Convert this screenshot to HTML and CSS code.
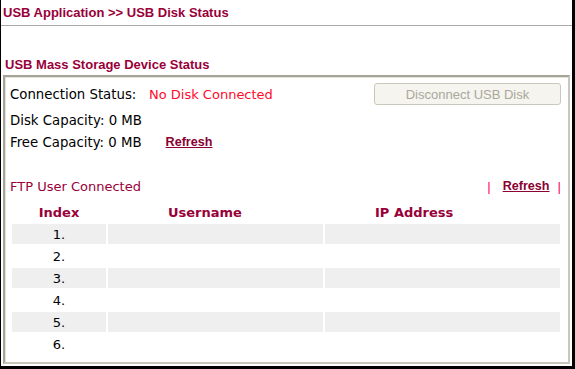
FILE: index.html
```html
<!DOCTYPE html>
<html>
<head>
<meta charset="utf-8">
<link rel="stylesheet" href="styles.css">
</head>
<body>
<div class="page">
  <div class="title">USB Application &gt;&gt; USB Disk Status</div>
  <div class="section-title">USB Mass Storage Device Status</div>
  <div class="box">
    <div class="info">
      <div class="row row1">
        <span class="label">Connection Status:</span>
        <span class="status">No Disk Connected</span>
        <button class="btn" disabled>Disconnect USB Disk</button>
      </div>
      <div class="row row2">Disk Capacity: 0 MB</div>
      <div class="row row3">Free Capacity: 0 MB <a class="link refresh1" href="#">Refresh</a></div>
    </div>
    <div class="ftp-row">
      <span class="ftp-title">FTP User Connected</span>
      <span class="ftp-actions"><span class="bar">|</span><a class="link" href="#">Refresh</a><span class="bar bar2">|</span></span>
    </div>
    <table class="users">
      <colgroup><col class="c1"><col class="c2"><col class="c3"></colgroup>
      <thead>
        <tr><th class="h1">Index</th><th class="h2">Username</th><th class="h3">IP Address</th></tr>
      </thead>
      <tbody>
        <tr class="odd"><td class="idx">1.</td><td></td><td></td></tr>
        <tr><td class="idx">2.</td><td></td><td></td></tr>
        <tr class="odd"><td class="idx">3.</td><td></td><td></td></tr>
        <tr><td class="idx">4.</td><td></td><td></td></tr>
        <tr class="odd"><td class="idx">5.</td><td></td><td></td></tr>
        <tr><td class="idx">6.</td><td></td><td></td></tr>
      </tbody>
    </table>
  </div>
</div>
</body>
</html>
```

FILE: styles.css
```css
html, body {
  margin: 0;
  padding: 0;
  background: #fff;
}
.page {
  width: 571px;
  height: 366px;
  border-left: 1px solid #000;
  border-right: 3px solid #000;
  border-bottom: 3px solid #000;
  font-family: "DejaVu Sans", Verdana, sans-serif;
  font-size: 13.3px;
  color: #000;
  overflow: hidden;
}
.title {
  height: 25px;
  line-height: 25px;
  padding-left: 2px;
  border-bottom: 1px solid #a8a8a8;
  font-family: "Liberation Sans", Arial, sans-serif;
  font-weight: bold;
  font-size: 13px;
  color: #99003a;
}
.section-title {
  margin-top: 30px;
  height: 19px;
  line-height: 17px;
  padding-left: 4px;
  font-family: "Liberation Sans", Arial, sans-serif;
  font-weight: bold;
  font-size: 13px;
  color: #99003a;
}
.box {
  margin: 0 2px;
  height: 285px;
  border: 2px solid #a5a498;
  border-right-color: #c9c7ba;
  border-bottom-color: #c9c7ba;
  box-shadow: inset 1px 1px 0 #e4e2d8;
  padding: 0 5px;
}
.info {
  padding-top: 4px;
}
.row {
  display: flex;
  align-items: center;
}
.row1 { height: 26px; }
.row2 { height: 26px; }
.row3 { height: 18px; }
.label {
  width: 139px;
}
.status {
  color: #ff0a2a;
  font-size: 13px;
  flex: 1;
}
.btn {
  width: 187px;
  height: 22px;
  margin-right: 2px;
  padding: 0;
  background: #f5f4ee;
  border: 1px solid #cac8bb;
  border-radius: 3px;
  font-family: "Liberation Sans", Arial, sans-serif;
  font-size: 13px;
  color: #a9a89c;
}
.link {
  font-family: "Liberation Sans", Arial, sans-serif;
  font-weight: bold;
  font-size: 12.6px;
  color: #8a0033;
  text-decoration: underline;
}
.refresh1 {
  margin-left: 24px;
}
.ftp-row {
  margin-top: 25px;
  height: 20px;
  width: 552px;
  display: flex;
  align-items: center;
  justify-content: space-between;
}
.ftp-title {
  color: #99003a;
  font-size: 13px;
}
.ftp-actions {
  display: flex;
  align-items: center;
  margin-right: 1px;
}
.bar {
  font-family: "Liberation Sans", Arial, sans-serif;
  color: #ff0a5a;
  margin-right: 12px;
}
.bar2 {
  margin-right: 0;
  margin-left: 8px;
}
.users {
  margin-top: 4px;
  width: 552px;
  border-spacing: 2px;
  table-layout: fixed;
}
.c1 { width: 94px; }
.c2 { width: 215px; }
.c3 { width: 235px; }
.users th, .users td {
  height: 20px;
  padding: 0;
  font-size: 13px;
}
.users th {
  font-weight: bold;
  color: #99003a;
  text-align: left;
}
.h1 { text-align: center !important; }
.h2 { padding-left: 60px !important; }
.h3 { padding-left: 50px !important; }
.odd td {
  background: #efefef;
}
.idx {
  text-align: center;
}
```
